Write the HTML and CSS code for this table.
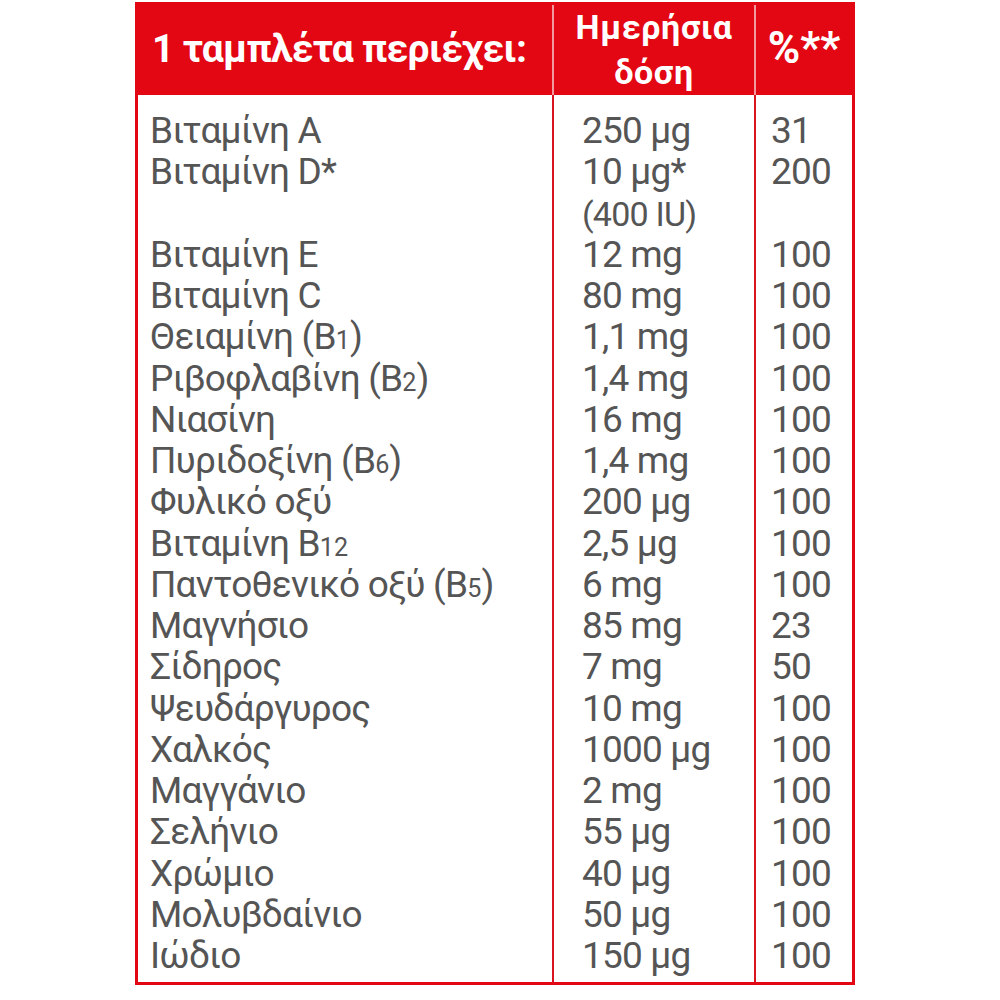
FILE: index.html
```html
<!DOCTYPE html>
<html lang="el">
<head>
<meta charset="utf-8">
<title>Συστατικά</title>
<link rel="stylesheet" href="styles.css">
</head>
<body>
<div class="panel">
  <div class="head">
    <div class="h-name">1 ταμπλέτα περιέχει:</div>
    <div class="h-dose">Ημερήσια<br>δόση</div>
    <div class="h-pct">%**</div>
  </div>
  <div class="body">
    <div class="c name top">Βιταμίνη A</div><div class="c dose top">250 μg</div><div class="c pct top">31</div>
    <div class="c name">Βιταμίνη D*</div><div class="c dose">10 μg*<br><span class="iu">(400 IU)</span></div><div class="c pct">200</div>
    <div class="c name">Βιταμίνη E</div><div class="c dose">12 mg</div><div class="c pct">100</div>
    <div class="c name">Βιταμίνη C</div><div class="c dose">80 mg</div><div class="c pct">100</div>
    <div class="c name">Θειαμίνη (B<span class="sub">1</span>)</div><div class="c dose">1,1 mg</div><div class="c pct">100</div>
    <div class="c name">Ριβοφλαβίνη (B<span class="sub">2</span>)</div><div class="c dose">1,4 mg</div><div class="c pct">100</div>
    <div class="c name">Νιασίνη</div><div class="c dose">16 mg</div><div class="c pct">100</div>
    <div class="c name">Πυριδοξίνη (B<span class="sub">6</span>)</div><div class="c dose">1,4 mg</div><div class="c pct">100</div>
    <div class="c name">Φυλικό οξύ</div><div class="c dose">200 μg</div><div class="c pct">100</div>
    <div class="c name">Βιταμίνη B<span class="sub">12</span></div><div class="c dose">2,5 μg</div><div class="c pct">100</div>
    <div class="c name">Παντοθενικό οξύ (B<span class="sub">5</span>)</div><div class="c dose">6 mg</div><div class="c pct">100</div>
    <div class="c name">Μαγνήσιο</div><div class="c dose">85 mg</div><div class="c pct">23</div>
    <div class="c name">Σίδηρος</div><div class="c dose">7 mg</div><div class="c pct">50</div>
    <div class="c name">Ψευδάργυρος</div><div class="c dose">10 mg</div><div class="c pct">100</div>
    <div class="c name">Χαλκός</div><div class="c dose">1000 μg</div><div class="c pct">100</div>
    <div class="c name">Μαγγάνιο</div><div class="c dose">2 mg</div><div class="c pct">100</div>
    <div class="c name">Σελήνιο</div><div class="c dose">55 μg</div><div class="c pct">100</div>
    <div class="c name">Χρώμιο</div><div class="c dose">40 μg</div><div class="c pct">100</div>
    <div class="c name">Μολυβδαίνιο</div><div class="c dose">50 μg</div><div class="c pct">100</div>
    <div class="c name bot">Ιώδιο</div><div class="c dose bot">150 μg</div><div class="c pct bot">100</div>
  </div>
</div>
</body>
</html>
```
FILE: styles.css
```css
html, body {
  margin: 0;
  padding: 0;
  background: #ffffff;
}

.panel {
  box-sizing: border-box;
  width: 720px;
  margin: 2px 0 0 135px;
  border: 3px solid #e30613;
  font-family: Roboto, "Noto Sans", sans-serif;
}

.head {
  display: grid;
  grid-template-columns: 414px 202px 98px;
  height: 90px;
  background: #e30613;
  color: #ffffff;
  font-weight: 700;
}

.h-name {
  align-self: center;
  padding-left: 14px;
  padding-bottom: 2px;
  font-size: 39px;
  line-height: 48px;
  letter-spacing: -0.7px;
  white-space: nowrap;
}

.h-dose {
  border-left: 2px solid #f39aa0;
  text-align: center;
  font-size: 34px;
  line-height: 45px;
  letter-spacing: 0.6px;
}

.h-pct {
  border-left: 2px solid #f39aa0;
  display: flex;
  align-items: center;
  justify-content: center;
  font-size: 44px;
  padding-bottom: 4px;
}

.body {
  display: grid;
  grid-template-columns: 414px 202px 98px;
  color: #555555;
  font-size: 37px;
  line-height: 41.25px;
  letter-spacing: -0.8px;
}

.c {
  white-space: nowrap;
}

.name {
  padding-left: 12px;
}

.dose {
  border-left: 2px solid #d9141e;
  padding-left: 28px;
}

.pct {
  border-left: 2px solid #d9141e;
  padding-left: 15px;
}

.top {
  padding-top: 15px;
}

.bot {
  padding-bottom: 6px;
}

.sub {
  font-size: 0.68em;
  line-height: 1;
  letter-spacing: 0;
}

.iu {
  font-size: 0.92em;
  line-height: 1;
}
```
